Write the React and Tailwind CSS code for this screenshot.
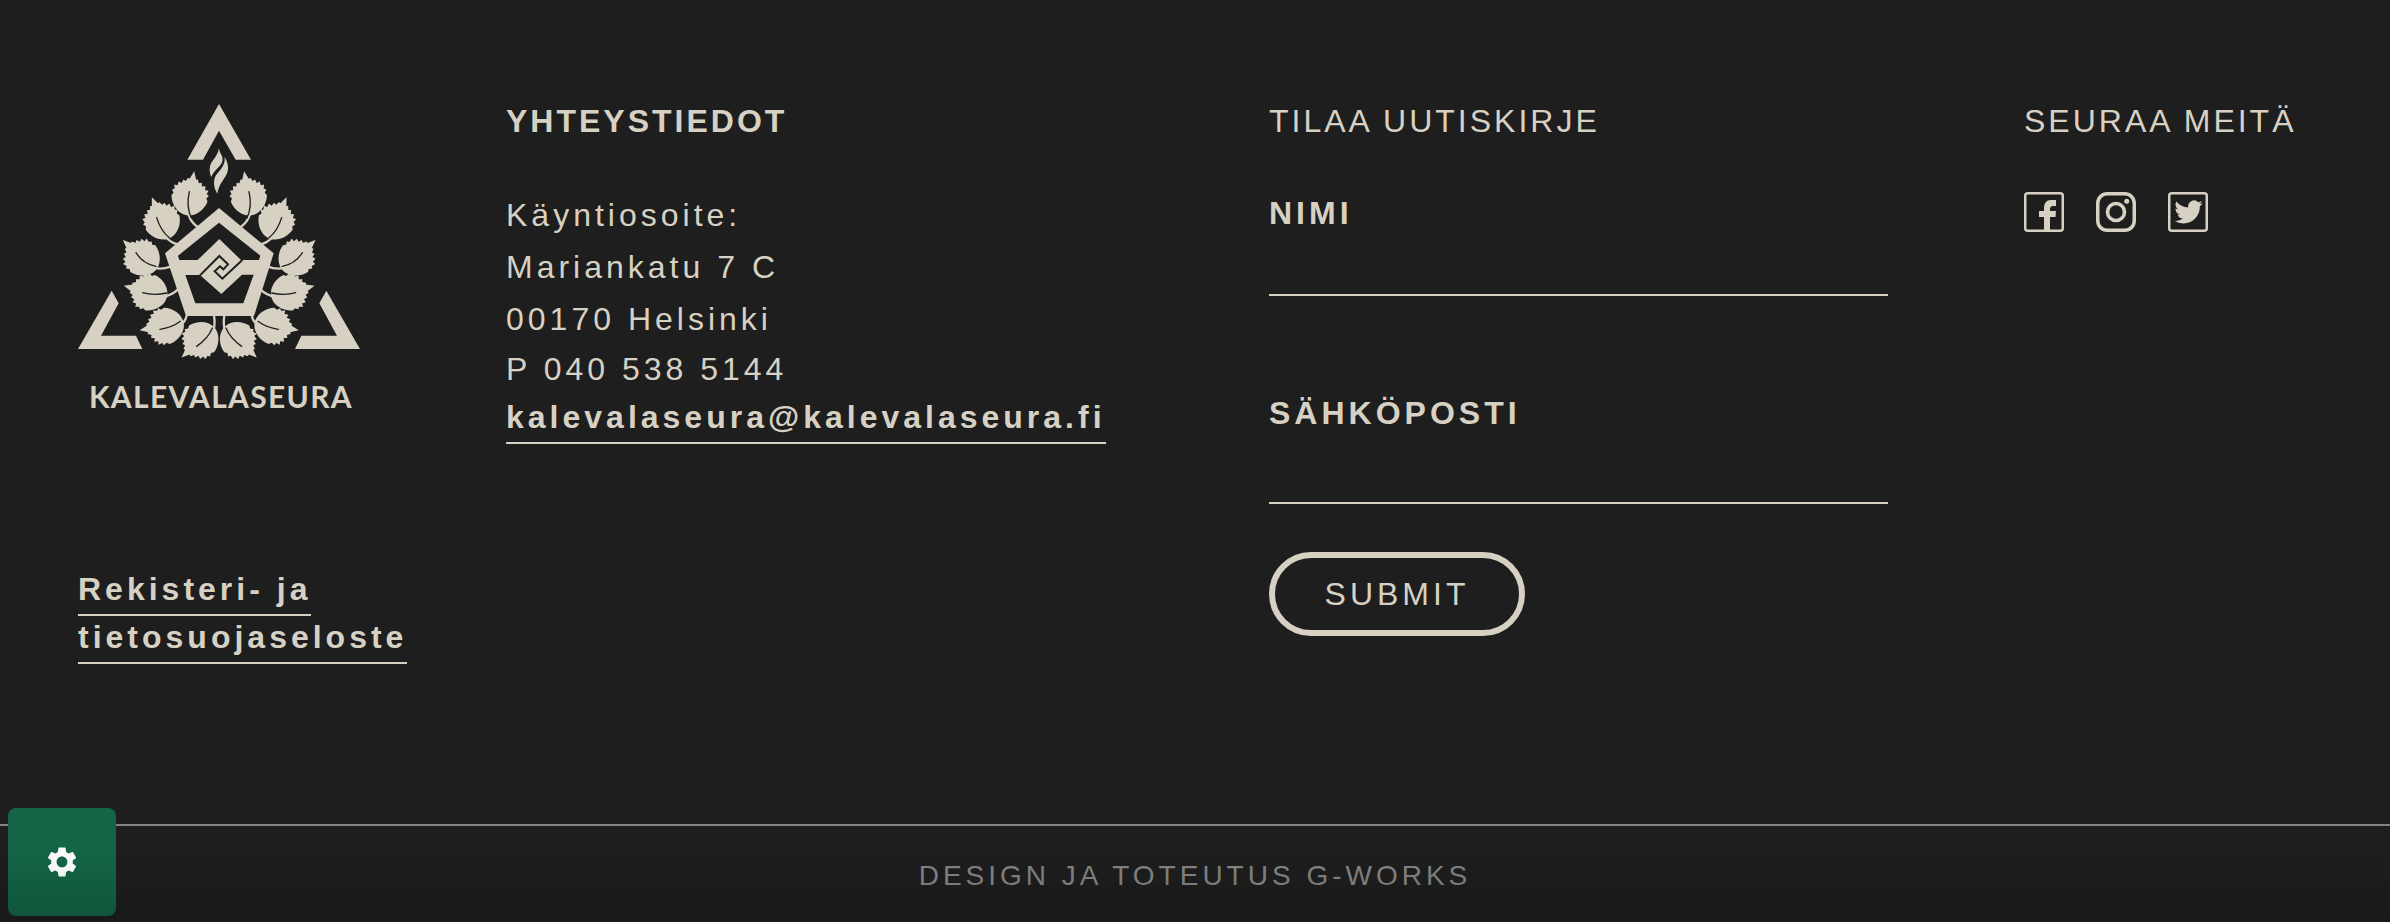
import React from "react";
import { MdSettings } from "react-icons/md";

const leaves = [
  {
    place: "translate(390 316) rotate(10)",
    vein: "M388 305 C381 335 383 360 394 384",
    stem: "M386 374 C391 392 400 402 413 411",
  },
  {
    place: "translate(304 389) rotate(-23)",
    vein: "M290 383 C299 412 311 430 328 443",
    stem: "M316 440 C328 453 340 460 354 463",
  },
  {
    place: "translate(242 500) rotate(-47)",
    vein: "M228 488 C242 511 262 524 288 529",
    stem: "M270 530 C290 538 312 537 332 530",
  },
  {
    place: "translate(262 606) rotate(-75)",
    vein: "M248 608 C275 616 298 614 320 609",
    stem: "M305 622 C325 618 342 610 354 598",
  },
  {
    place: "translate(311 709) rotate(-99)",
    vein: "M300 718 C325 715 345 706 361 694",
    stem: "M360 706 C372 698 378 688 380 676",
  },
  {
    place: "translate(418 753) rotate(-133)",
    vein: "M410 769 C434 752 448 737 457 714",
    stem: "M458 730 C465 710 465 694 462 676",
  },
];

const leafShape =
  "M0 -73 L10 -49 L15 -51 L20 -40 L28 -43 L31 -32 L41 -35 L42 -23 L52 -24 L49 -12 L56 -8 L50 1 L55 9 C50 37 26 61 0 61 C-26 61 -50 37 -55 9 L-50 1 L-56 -8 L-49 -12 L-52 -24 L-42 -23 L-41 -35 L-31 -32 L-28 -43 L-20 -40 L-15 -51 L-10 -49 Z";

const LeafSide = () => (
  <>
    {leaves.map((leaf) => (
      <g key={leaf.place}>
        <path d={leaf.stem} fill="none" stroke="#d7d1c4" strokeWidth="7" />
        <path d={leafShape} transform={leaf.place} fill="#d7d1c4" />
        <path
          d={leaf.vein}
          fill="none"
          stroke="#1e1e1e"
          strokeWidth="4"
          strokeLinecap="round"
        />
      </g>
    ))}
  </>
);

const Logo = () => (
  <svg
    viewBox="54 42 846 948"
    className="w-[282px] h-auto overflow-visible"
    role="img"
    aria-label="Kalevalaseura"
  >
    <g fill="#d7d1c4">
      <path d="M477 42 L573 209 L527 209 L477 122 L429 209 L382 209 Z" />
      <path d="M155 602 L176 640 L123 737 L228 737 L247 777 L54 777 Z" />
      <path d="M799 602 L778 640 L831 737 L724 737 L705 777 L900 777 Z" />
      {/* flame */}
      <path d="M477 174 C478 192 491 196 487 214 C483 230 462 240 454 261 C446 243 448 224 458 212 C468 200 474 190 477 174 Z" />
      <path d="M494 200 C506 222 508 240 497 258 C487 275 476 286 472 311 C459 290 460 270 468 256 C478 240 497 228 494 200 Z" />
    </g>
    <LeafSide />
    <g transform="translate(955 0) scale(-1 1)">
      <LeafSide />
    </g>
    {/* pentagon */}
    <path d="M477 354 L641 490 L582 678 L378 678 L315 490 Z" fill="#d7d1c4" />
    <g fill="#1e1e1e">
      <path d="M477 398 L601 497 L597 510 L543 510 L478 447 L413 510 L358 510 L354 497 Z" />
      <path d="M376 555 L420 555 L484 612 L546 554 L581 554 L550 640 L406 640 Z" />
    </g>
    <path
      d="M420 556 L478 498 L504 523 L490 538 L480 529 L464 544 L487 566 L547 510"
      fill="none"
      stroke="#1e1e1e"
      strokeWidth="6"
    />
    <text
      x="483"
      y="953"
      textAnchor="middle"
      fill="#d7d1c4"
      className="font-['Lato',sans-serif] font-bold text-[90px] tracking-[4px]"
    >
      KALEVALASEURA
    </text>
  </svg>
);

const FacebookIcon = () => (
  <svg viewBox="0 0 40 40" className="size-10" fill="#d7d1c4">
    <rect x="1.25" y="1.25" width="37.5" height="37.5" rx="2.5" fill="none" stroke="#d7d1c4" strokeWidth="2.5" />
    <path d="M20 39 V25 H15 V19 H20 V16 C20 11 22.5 8 27 8 H32 V14 H29 C27 14 26 15 26 17 V19 H32 L31.5 25 H26 V39 Z" />
  </svg>
);

const InstagramIcon = () => (
  <svg viewBox="0 0 40 40" className="size-10" fill="none" stroke="#d7d1c4">
    <rect x="1.75" y="1.75" width="36.5" height="36.5" rx="9.5" strokeWidth="3.5" />
    <circle cx="20" cy="20" r="8.5" strokeWidth="3.6" />
    <circle cx="30.7" cy="9.3" r="2.5" fill="#d7d1c4" stroke="none" />
  </svg>
);

const TwitterIcon = () => (
  <svg viewBox="0 0 40 40" className="size-10">
    <rect x="1.25" y="1.25" width="37.5" height="37.5" rx="2.5" fill="none" stroke="#d7d1c4" strokeWidth="2.5" />
    <path
      transform="translate(6.4 5.8) scale(1.18)"
      fill="#d7d1c4"
      d="M23.95 4.57a10 10 0 0 1-2.82.77 4.96 4.96 0 0 0 2.16-2.72c-.95.55-2 .95-3.13 1.18a4.92 4.92 0 0 0-8.38 4.48C7.69 8.1 4.07 6.13 1.64 3.16a4.92 4.92 0 0 0 1.52 6.57 4.9 4.9 0 0 1-2.23-.61v.06a4.92 4.92 0 0 0 3.95 4.83 5 5 0 0 1-2.21.08 4.94 4.94 0 0 0 4.6 3.42A9.87 9.87 0 0 1 0 19.54a14 14 0 0 0 7.55 2.21c9.05 0 14-7.5 14-13.98 0-.21 0-.42-.02-.63a9.94 9.94 0 0 0 2.42-2.57z"
    />
  </svg>
);

const socials = [
  { name: "Facebook", Icon: FacebookIcon },
  { name: "Instagram", Icon: InstagramIcon },
  { name: "Twitter", Icon: TwitterIcon },
];

const App = () => {
  return (
    <div className="min-h-screen bg-[#1e1e1e] text-[#d7d1c4] font-['Liberation_Sans',Arial,sans-serif] text-[32px] leading-[48px]">
      <footer>
        <div className="grid grid-cols-[428fr_763fr_755fr_288fr] px-[78px] pt-[97px] pb-[163px]">
          <div>
            <a href="#" className="block pt-[7px]">
              <Logo />
            </a>
            <div className="mt-[145px] pr-8">
              <a
                href="#"
                className="font-bold tracking-[4px] border-b-2 border-[#d7d1c4] pb-[7px]"
              >
                Rekisteri- ja tietosuojaseloste
              </a>
            </div>
          </div>

          <div>
            <h2 className="font-bold tracking-[3px]">YHTEYSTIEDOT</h2>
            <address className="not-italic tracking-[4px] mt-11">
              <p className="leading-[52px]">
                Käyntiosoite:
                <br />
                Mariankatu 7 C
                <br />
                00170 Helsinki
              </p>
              <p>P 040 538 5144</p>
              <a
                href="mailto:kalevalaseura@kalevalaseura.fi"
                className="font-bold border-b-2 border-[#d7d1c4] pb-[7px]"
              >
                kalevalaseura@kalevalaseura.fi
              </a>
            </address>
          </div>

          <div>
            <h2 className="tracking-[3px]">TILAA UUTISKIRJE</h2>
            <form
              className="mt-11 mr-[136px]"
              onSubmit={(e) => e.preventDefault()}
            >
              <label htmlFor="nimi" className="block font-bold tracking-[4px]">
                NIMI
              </label>
              <input
                id="nimi"
                type="text"
                className="block w-full h-[59px] bg-transparent border-b-2 border-[#d7d1c4] outline-none"
              />
              <label
                htmlFor="email"
                className="block font-bold tracking-[4px] mt-[93px]"
              >
                SÄHKÖPOSTI
              </label>
              <input
                id="email"
                type="email"
                className="block w-full h-[67px] bg-transparent border-b-2 border-[#d7d1c4] outline-none"
              />
              <button
                type="submit"
                className="mt-12 w-64 h-[84px] rounded-full border-6 border-[#d7d1c4] tracking-[4px]"
              >
                SUBMIT
              </button>
            </form>
          </div>

          <div>
            <h2 className="tracking-[3px] whitespace-nowrap">SEURAA MEITÄ</h2>
            <div className="flex gap-8 mt-[47px]">
              {socials.map(({ name, Icon }) => (
                <a key={name} href="#" aria-label={name}>
                  <Icon />
                </a>
              ))}
            </div>
          </div>
        </div>

        <div className="border-t-2 border-[#848484] pt-[26px] pb-[22px] text-center text-[28px] tracking-[4px] text-[#848484]">
          DESIGN JA TOTEUTUS G-WORKS
        </div>
      </footer>

      {/* cookie settings */}
      <button
        type="button"
        aria-label="Settings"
        className="fixed left-2 bottom-1.5 size-27 rounded-lg bg-[#146546] text-white flex items-center justify-center"
      >
        <MdSettings className="size-9" />
      </button>
      <div className="fixed inset-x-0 bottom-0 h-18 bg-linear-to-b from-transparent to-black/15 pointer-events-none"></div>
    </div>
  );
};

export default App;
